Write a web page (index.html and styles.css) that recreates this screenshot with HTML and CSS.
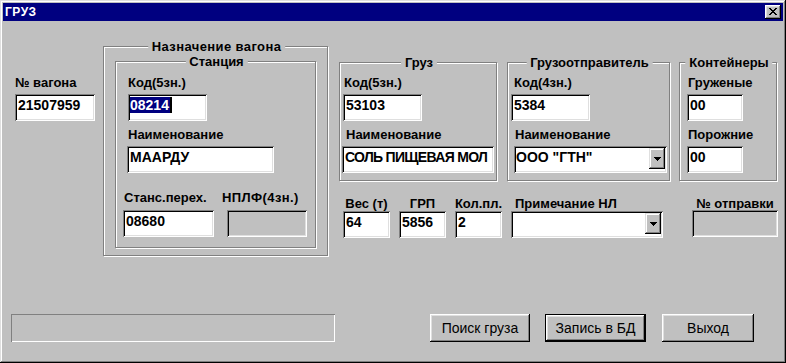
FILE: index.html
```html
<!DOCTYPE html>
<html lang="ru">
<head>
    <meta charset="UTF-8">
    <meta name="viewport" content="width=device-width, initial-scale=1.0">
    <title>ГРУЗ</title>
    <link rel="stylesheet" href="styles.css">
</head>
<body>
<div class="window">
    <div class="titlebar">
        <span class="title">ГРУЗ</span>
        <button class="close-btn" title="Закрыть">
            <svg width="8" height="7" viewBox="0 0 8 7" shape-rendering="crispEdges">
                <rect x="0" y="0" width="2" height="1"/><rect x="6" y="0" width="2" height="1"/>
                <rect x="1" y="1" width="2" height="1"/><rect x="5" y="1" width="2" height="1"/>
                <rect x="2" y="2" width="4" height="1"/>
                <rect x="3" y="3" width="2" height="1"/>
                <rect x="2" y="4" width="4" height="1"/>
                <rect x="1" y="5" width="2" height="1"/><rect x="5" y="5" width="2" height="1"/>
                <rect x="0" y="6" width="2" height="1"/><rect x="6" y="6" width="2" height="1"/>
            </svg>
        </button>
    </div>

    <div class="content">
        <div class="top">
            <div class="wagon">
                <div class="label">№ вагона</div>
                <div class="field wagon-field">21507959</div>
            </div>

            <div class="group dest">
                <span class="group-title">Назначение вагона</span>
                <div class="group station">
                    <span class="group-title">Станция</span>
                    <div class="label st-label">Код(5зн.)</div>
                    <div class="field st-code"><span class="sel">08214</span></div>
                    <div class="label st-label name-label">Наименование</div>
                    <div class="field st-name">МААРДУ</div>
                    <div class="st-row">
                        <div class="st-col">
                            <div class="label transit-label">Станс.перех.</div>
                            <div class="field transit-field">08680</div>
                        </div>
                        <div class="st-col nplf">
                            <div class="label">НПЛФ(4зн.)</div>
                            <div class="field disabled nplf-field"></div>
                        </div>
                    </div>
                </div>
            </div>

            <div class="right">
                <div class="groups">
                    <div class="group cargo">
                        <span class="group-title">Груз</span>
                        <div class="label code-label">Код(5зн.)</div>
                        <div class="field code-field">53103</div>
                        <div class="label name-label">Наименование</div>
                        <div class="field name-field">СОЛЬ ПИЩЕВАЯ МОЛ</div>
                    </div>
                    <div class="group shipper">
                        <span class="group-title">Грузоотправитель</span>
                        <div class="label code-label">Код(4зн.)</div>
                        <div class="field code-field">5384</div>
                        <div class="label name-label">Наименование</div>
                        <div class="field combo shipper-combo">
                            <span class="combo-text">ООО "ГТН"</span>
                            <span class="combo-btn"><svg width="7" height="4" viewBox="0 0 7 4" shape-rendering="crispEdges"><path d="M0 0h7L3.5 4z"/></svg></span>
                        </div>
                    </div>
                    <div class="group containers">
                        <span class="group-title">Контейнеры</span>
                        <div class="label">Груженые</div>
                        <div class="field box-field">00</div>
                        <div class="label name-label">Порожние</div>
                        <div class="field box-field">00</div>
                    </div>
                </div>

                <div class="fields-row">
                    <div class="col small">
                        <div class="label">Вес (т)</div>
                        <div class="field">64</div>
                    </div>
                    <div class="col small">
                        <div class="label">ГРП</div>
                        <div class="field">5856</div>
                    </div>
                    <div class="col small">
                        <div class="label">Кол.пл.</div>
                        <div class="field">2</div>
                    </div>
                    <div class="col note">
                        <div class="label">Примечание НЛ</div>
                        <div class="field combo">
                            <span class="combo-text"></span>
                            <span class="combo-btn"><svg width="7" height="4" viewBox="0 0 7 4" shape-rendering="crispEdges"><path d="M0 0h7L3.5 4z"/></svg></span>
                        </div>
                    </div>
                    <div class="col sending">
                        <div class="label">№ отправки</div>
                        <div class="field disabled"></div>
                    </div>
                </div>
            </div>
        </div>

        <div class="bottom">
            <div class="status"></div>
            <button class="btn search-btn">Поиск груза</button>
            <button class="btn default save-btn">Запись в БД</button>
            <button class="btn exit-btn">Выход</button>
        </div>
    </div>
</div>
</body>
</html>
```

FILE: styles.css
```css
* {
    box-sizing: border-box;
}
body {
    margin: 0;
    background-color: #c0c0c0;
    font-family: "Liberation Sans", Arial, sans-serif;
    color: #000;
}
.window {
    width: 786px;
    height: 363px;
    padding: 3px;
    background-color: #c0c0c0;
    box-shadow: inset -1px -1px #000, inset 1px 1px #dfdfdf, inset -2px -2px #808080, inset 2px 2px #fff;
    display: flex;
    flex-direction: column;
}
.titlebar {
    height: 18px;
    background-color: #000080;
    color: #fff;
    display: flex;
    align-items: center;
    justify-content: space-between;
    padding: 0 2px;
}
.title {
    font-size: 12px;
    font-weight: bold;
    letter-spacing: 0.5px;
    line-height: 18px;
}
.close-btn {
    width: 16px;
    height: 14px;
    padding: 0 0 1px 0;
    border: none;
    background-color: #c0c0c0;
    box-shadow: inset -1px -1px #000, inset 1px 1px #fff, inset -2px -2px #808080, inset 2px 2px #dfdfdf;
    display: flex;
    align-items: center;
    justify-content: center;
}

/* controls */
.label {
    font-size: 13px;
    font-weight: bold;
    line-height: 13px;
    white-space: nowrap;
}
.field {
    height: 27px;
    padding: 3px 1px 0 3px;
    background-color: #fff;
    box-shadow: inset 1px 1px #808080, inset -1px -1px #fff, inset 2px 2px #000, inset -2px -2px #dfdfdf;
    font-size: 14px;
    font-weight: bold;
    line-height: 16px;
    white-space: nowrap;
    overflow: hidden;
}
.field.disabled {
    background-color: #c0c0c0;
}
.sel {
    background-color: #000080;
    color: #fff;
    padding: 0 1px 0 0;
    margin-left: -1px;
    border-right: 2px solid #000;
}
.combo {
    display: flex;
    align-items: flex-start;
    padding: 2px 2px 2px 2px;
}
.combo-text {
    flex: 1;
    padding-top: 1px;
    overflow: hidden;
}
.combo-btn {
    width: 16px;
    height: 21px;
    background-color: #c0c0c0;
    box-shadow: inset -1px -1px #000, inset 1px 1px #dfdfdf, inset -2px -2px #808080, inset 2px 2px #fff;
    display: flex;
    align-items: center;
    justify-content: center;
    padding-top: 1px;
}

/* group frames */
.group {
    position: relative;
    border: 1px solid #808080;
    box-shadow: inset 1px 1px #fff, 1px 1px #fff;
    display: flex;
    flex-direction: column;
    align-items: flex-start;
}
.group-title {
    position: absolute;
    top: -7px;
    left: 50%;
    transform: translateX(-50%);
    margin-left: 1px;
    padding: 0 4px;
    background-color: #c0c0c0;
    font-size: 13px;
    font-weight: bold;
    line-height: 13px;
    white-space: nowrap;
}
.dest > .group-title {
    letter-spacing: 0.4px;
}

/* layout */
.content {
    display: flex;
    flex-direction: column;
}
.top {
    display: flex;
    align-items: flex-start;
}
.wagon {
    margin: 55px 0 0 12px;
    width: 80px;
}
.wagon .label {
    margin-bottom: 5px;
}
.wagon-field {
    width: 80px;
}

.dest {
    margin: 25px 0 0 8px;
    width: 225px;
    height: 210px;
}
.station {
    margin: 14px 0 0 11px;
    width: 201px;
    height: 187px;
    padding: 14px 0 0 7px;
}
.st-label {
    margin: 0 0 5px 5px;
}
.station .name-label {
    margin-top: 7px;
}
.st-code {
    width: 79px;
    margin-left: 5px;
}
.st-name {
    width: 147px;
    margin-left: 4px;
}
.st-row {
    display: flex;
    margin-top: 18px;
}
.st-col .label {
    margin-bottom: 6px;
}
.transit-label {
    margin-left: 1px;
}
.transit-field {
    width: 91px;
}
.nplf {
    margin-left: 8px;
}
.nplf .label {
    letter-spacing: 0.4px;
}
.nplf-field {
    width: 80px;
    margin-left: 5px;
}

.right {
    margin: 41px 0 0 11px;
}
.groups {
    display: flex;
}
.groups .group {
    height: 119px;
    padding-top: 13px;
}
.groups .label {
    margin-bottom: 5px;
}
.groups .name-label {
    margin-top: 7px;
}
.cargo {
    width: 158px;
    padding-left: 2px;
}
.cargo .code-label {
    margin-left: 2px;
}
.cargo .code-field {
    width: 79px;
    margin-left: 1px;
}
.cargo .name-label {
    margin-left: 4px;
}
.name-field {
    width: 152px;
    letter-spacing: -0.7px;
}
.shipper {
    width: 163px;
    margin-left: 10px;
    padding-left: 3px;
}
.shipper .code-label {
    margin-left: 3px;
}
.shipper .code-field {
    width: 79px;
}
.shipper .name-label {
    margin-left: 4px;
}
.shipper-combo {
    width: 153px;
    margin-left: 3px;
}
.containers {
    width: 98px;
    margin-left: 9px;
    padding-left: 7px;
}
.containers .label {
    margin-left: 1px;
}
.box-field {
    width: 56px;
}

.fields-row {
    display: flex;
    margin-top: 16px;
    padding-left: 4px;
}
.col {
    display: flex;
    flex-direction: column;
    align-items: center;
}
.col .label {
    margin-bottom: 1px;
}
.col + .col {
    margin-left: 9px;
}
.col .field {
    width: 100%;
}
.small {
    width: 47px;
}
.note {
    width: 152px;
    align-items: flex-start;
}
.note .label {
    margin-left: 4px;
}
.col.sending {
    width: 86px;
    margin-left: 29px;
}
.sending .field {
    margin-top: -1px;
}

.bottom {
    display: flex;
    margin-top: 58px;
}
.status {
    width: 324px;
    height: 28px;
    margin-left: 8px;
    box-shadow: inset 1px 1px #808080, inset -1px -1px #fff;
}
.btn {
    height: 28px;
    padding: 0;
    border: none;
    background-color: #c0c0c0;
    box-shadow: inset -1px -1px #000, inset 1px 1px #fff, inset -2px -2px #808080, inset 2px 2px #dfdfdf;
    font-family: "Liberation Sans", Arial, sans-serif;
    font-size: 14px;
    color: #000;
    cursor: pointer;
}
.btn.default {
    border: 1px solid #000;
}
.search-btn {
    width: 100px;
    margin-left: 95px;
}
.save-btn {
    width: 101px;
    margin-left: 15px;
}
.exit-btn {
    width: 92px;
    margin-left: 16px;
}
```
